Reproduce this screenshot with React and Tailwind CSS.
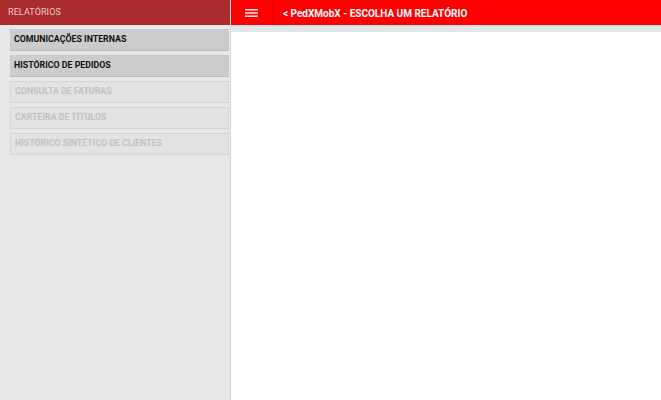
import React from "react";

const items = [
  { label: "COMUNICAÇÕES INTERNAS", enabled: true },
  { label: "HISTÓRICO DE PEDIDOS", enabled: true },
  { label: "CONSULTA DE FATURAS", enabled: false },
  { label: "CARTEIRA DE TÍTULOS", enabled: false },
  { label: "HISTÓRICO SINTÉTICO DE CLIENTES", enabled: false },
];

const font = { fontFamily: "Roboto, 'Noto Sans', sans-serif" };

export default function App() {
  return (
    <div className="w-[661px] h-[400px] flex overflow-hidden bg-white" style={font}>
      {/* Drawer */}
      <div className="w-[231px] h-full flex flex-col bg-[#e8e8e8] border-r border-[#d8d8d8]">
        <div className="h-[25px] bg-[#a92b2b] flex items-center px-2 pt-[1px]">
          <span className="text-[9px] text-[#f3c9c9] tracking-[0.1px]">RELATÓRIOS</span>
        </div>
        <div className="flex flex-col gap-[4px] pt-[4px] pl-[10px] pr-[1px]">
          {items.map((it) =>
            it.enabled ? (
              <div
                key={it.label}
                className="h-[22px] bg-[#cccccc] border-b border-[#bdbdbd] flex items-center px-1"
              >
                <span className="text-[8.8px] font-bold text-[#111111]">{it.label}</span>
              </div>
            ) : (
              <div
                key={it.label}
                className="h-[22px] bg-[#e3e3e3] border border-[#d6d6d6] flex items-center px-1"
              >
                <span className="text-[8.8px] font-bold text-[#c2c2c2]">{it.label}</span>
              </div>
            )
          )}
        </div>
      </div>

      {/* Content */}
      <div className="flex-1 flex flex-col">
        <div className="h-[25px] bg-[#ff0000] flex items-center pt-[1px]">
          <div className="w-[42px] h-full flex items-center justify-center border-r border-[#e80000]">
            <svg width="13" height="8" viewBox="0 0 13 8">
              <rect x="0" y="0" width="13" height="1.6" fill="#ffe0e0" />
              <rect x="0" y="3.2" width="13" height="1.6" fill="#ffe0e0" />
              <rect x="0" y="6.4" width="13" height="1.6" fill="#ffe0e0" />
            </svg>
          </div>
          <span className="ml-[10px] text-[10px] font-bold text-white">
            &lt; PedXMobX - ESCOLHA UM RELATÓRIO
          </span>
        </div>
        <div className="h-[7px] bg-[#e2e6e6]" />
        <div className="flex-1 bg-white" />
      </div>
    </div>
  );
}
